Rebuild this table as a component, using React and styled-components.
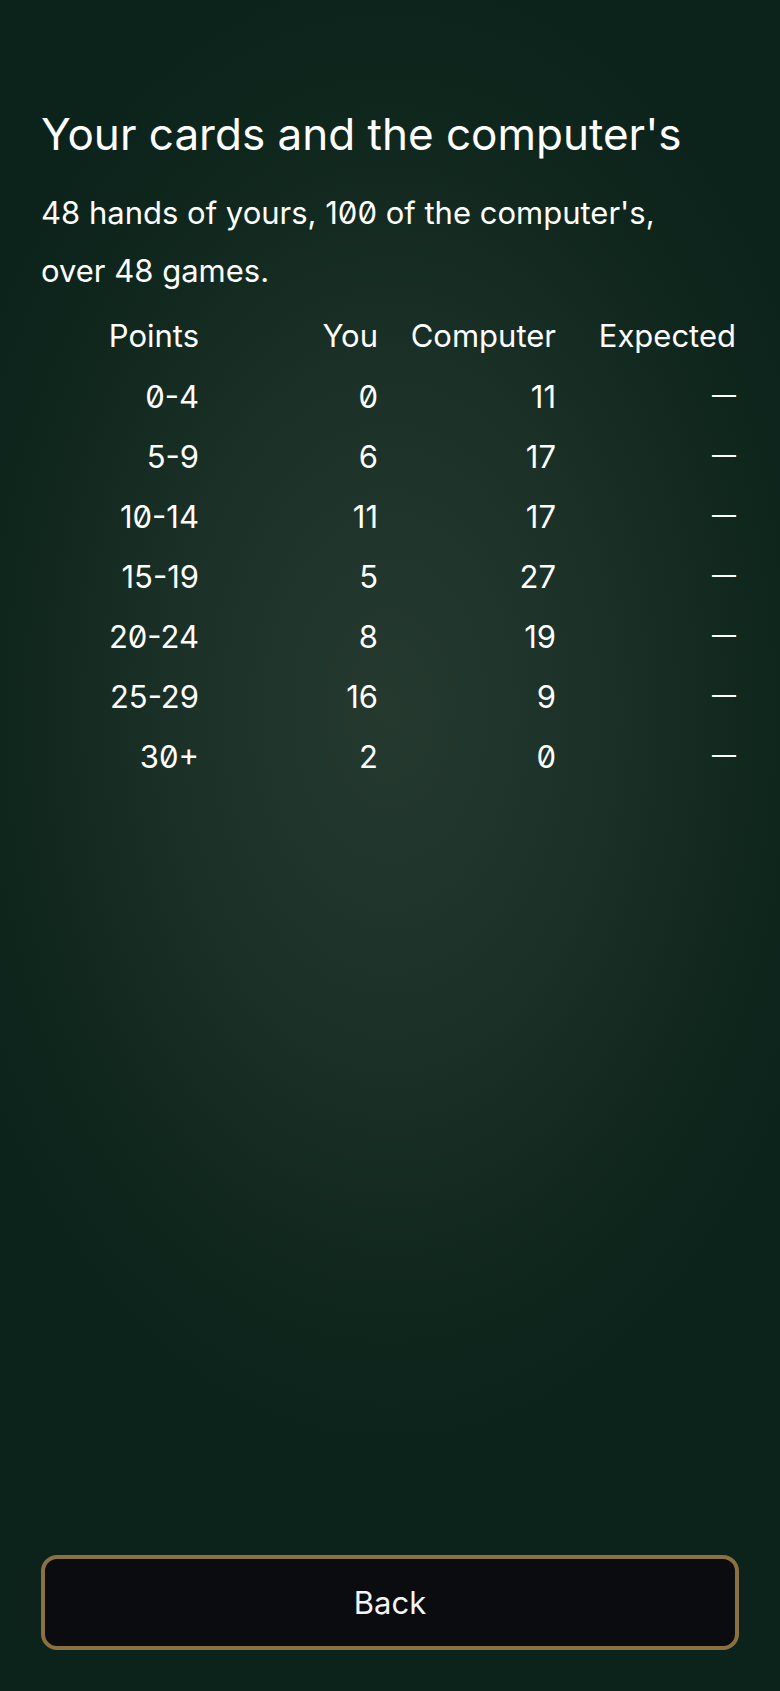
import React from "react";
import styled, { createGlobalStyle } from "styled-components";

const Global = createGlobalStyle`
  html, body { margin: 0; padding: 0; }
  body {
    background: #0b231b;
    font-family: Inter, "Noto Sans", sans-serif;
    color: #ffffff;
  }
  #root { min-height: 100vh; }
`;

const Page = styled.div`
  box-sizing: border-box;
  min-height: 100vh;
  display: flex;
  flex-direction: column;
  padding: 108px 41px 41px 41px;
  background: radial-gradient(ellipse 62% 45% at 50% 42%, #25392f 0%, #1b3127 45%, #0f261d 80%, #0b231b 100%);
  font-feature-settings: "zero" 1;
`;

const Title = styled.h1`
  margin: 0;
  font-size: 44px;
  line-height: 53px;
  font-weight: 400;
`;

const Subtitle = styled.p`
  margin: 23px 0 0 0;
  font-size: 31px;
  line-height: 58px;
  font-weight: 400;
`;

const Table = styled.div`
  margin-top: 5px;
  display: grid;
  grid-template-columns: 158px 179px 178px 180px;
`;

const Cell = styled.div`
  height: ${(p) => (p.$head ? "61px" : "60px")};
  display: flex;
  align-items: center;
  justify-content: flex-end;
  font-size: 31px;
  line-height: 1;
  white-space: nowrap;
`;

const Dash = styled.span`
  font-size: 24px;
  line-height: 1;
  transform: translateY(-1px);
`;

const Spacer = styled.div`
  flex: 1;
`;

const BackButton = styled.button`
  box-sizing: border-box;
  width: 100%;
  height: 95px;
  border: 4px solid #8b7142;
  border-radius: 16px;
  background: #0b0c10;
  color: #f4f4f4;
  font-family: Inter, "Noto Sans", sans-serif;
  font-size: 31px;
  cursor: pointer;
`;

const rows = [
  ["0-4", "0", "11"],
  ["5-9", "6", "17"],
  ["10-14", "11", "17"],
  ["15-19", "5", "27"],
  ["20-24", "8", "19"],
  ["25-29", "16", "9"],
  ["30+", "2", "0"],
];

export default function App() {
  return (
    <>
      <Global />
      <Page>
        <Title>Your cards and the computer's</Title>
        <Subtitle>
          48 hands of yours, 100 of the computer's,
          <br />
          over 48 games.
        </Subtitle>
        <Table>
          {["Points", "You", "Computer", "Expected"].map((h) => (
            <Cell key={h} $head>
              {h}
            </Cell>
          ))}
          {rows.map((r, i) => (
            <React.Fragment key={i}>
              {r.map((c, j) => (
                <Cell key={j}>{c}</Cell>
              ))}
              <Cell>
                <Dash>—</Dash>
              </Cell>
            </React.Fragment>
          ))}
        </Table>
        <Spacer />
        <BackButton>Back</BackButton>
      </Page>
    </>
  );
}
